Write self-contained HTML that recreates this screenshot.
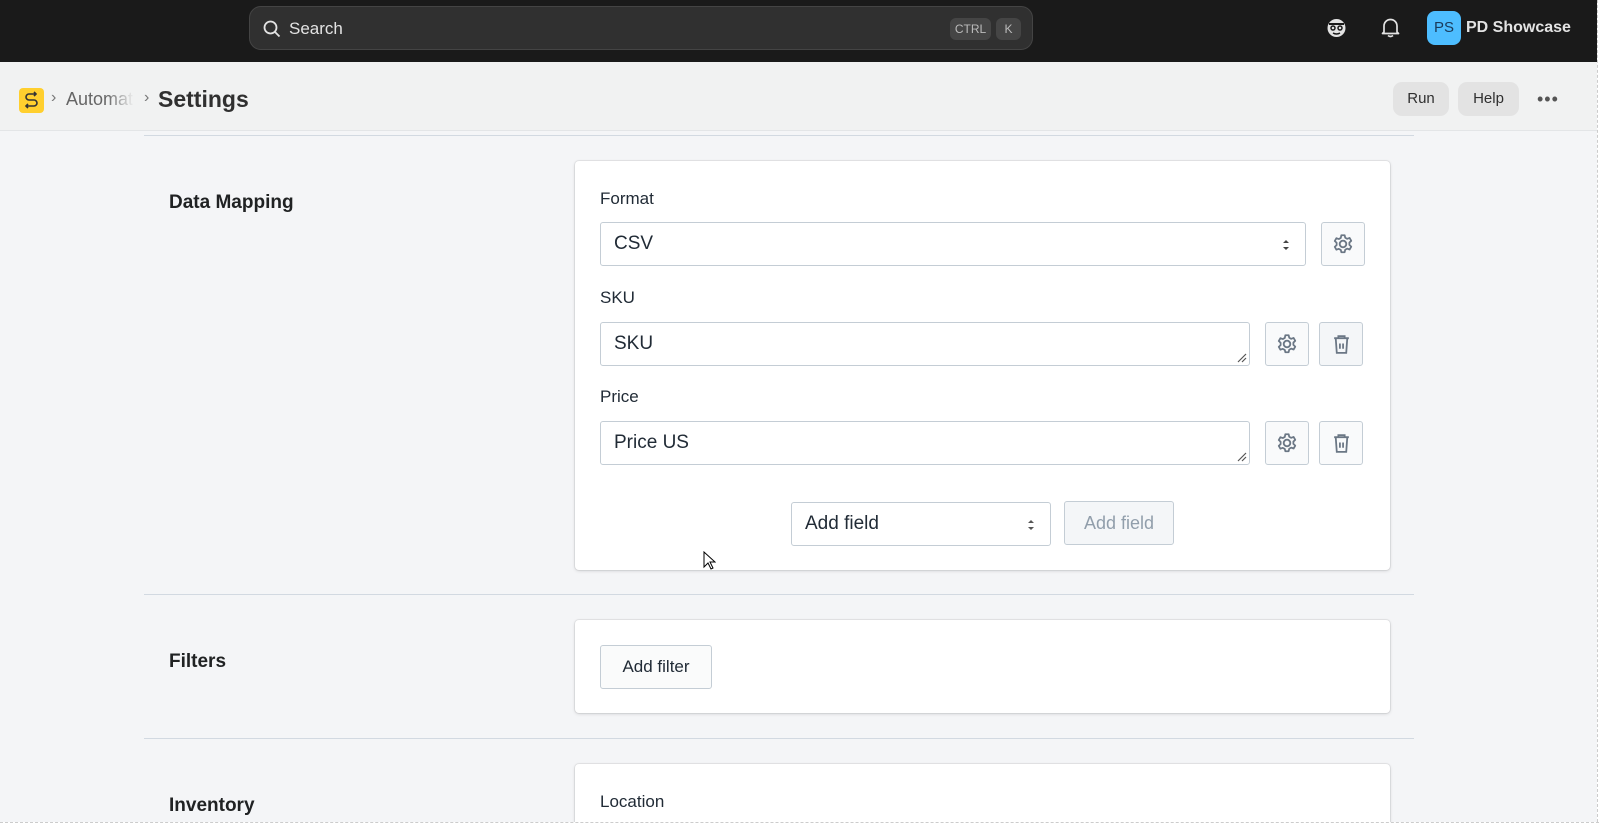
<!DOCTYPE html>
<html><head><style>
*{box-sizing:border-box;margin:0;padding:0}
body{width:1599px;height:839px;overflow:hidden;background:#fff;font-family:"Liberation Sans",sans-serif;position:relative}
.frame{position:absolute;left:0;top:0;width:1597px;height:822px;background:#f4f5f7;overflow:hidden}
.top{position:absolute;left:0;top:0;width:100%;height:62px;background:#1a1a1a}
.search{position:absolute;left:249px;top:6px;width:784px;height:44px;border-radius:12px;background:#303030;border:1px solid #444}
.search span{position:absolute;left:39px;top:12px;color:#e3e3e3;font-size:17px}
.kbd{position:absolute;top:11px;height:22px;background:#454545;border-radius:6px;color:#bbb;font-size:12px;line-height:22px;text-align:center}
.sub{position:absolute;left:0;top:62px;width:100%;height:69px;background:#f1f2f2;border-bottom:1px solid #e3e5e7}
.btn{position:absolute;top:20px;height:34px;border-radius:9px;background:#e3e3e3;font-size:15px;line-height:34px;text-align:center;color:#303030}
.sec{position:absolute;font-weight:bold;font-size:19px;color:#202223;left:169px}
.hr{position:absolute;left:144px;width:1270px;height:1px;background:#d2d9e1}
.card{position:absolute;left:575px;width:815px;background:#fff;border-radius:4px;box-shadow:0 0 0 1px rgba(63,63,68,.08),0 1px 3px rgba(63,63,68,.18)}
.lbl{position:absolute;left:25px;font-size:17px;color:#212b36}
.inp{position:absolute;left:25px;height:44px;border:1px solid #c4cdd5;border-radius:3px;font-size:19px;color:#212b36;padding:10px 13px;background:#fff}
.ib{position:absolute;width:44px;height:44px;border:1px solid #c4cdd5;border-radius:3px;background:#f9fafb;display:flex;align-items:center;justify-content:center}
.ib.g{background:#f4f6f8}
.arr{position:absolute;right:14px;top:15px}
.rs{position:absolute;right:2px;bottom:2px}
</style></head><body>
<div class="frame">
<div class="top">
 <div class="search">
  <svg style="position:absolute;left:13px;top:13px" width="18" height="18" viewBox="0 0 18 18"><circle cx="7.5" cy="7.5" r="6" fill="none" stroke="#e3e3e3" stroke-width="1.8"/><path d="M12 12l4.5 4.5" stroke="#e3e3e3" stroke-width="1.8"/></svg>
  <span>Search</span>
  <div class="kbd" style="left:700px;width:41px">CTRL</div>
  <div class="kbd" style="left:746px;width:25px">K</div>
 </div>
 <svg style="position:absolute;left:1326px;top:17px" width="21" height="21" viewBox="0 0 21 21"><circle cx="10.5" cy="11" r="9" fill="#e3e3e3"/><path d="M3 7h15" stroke="#1a1a1a" stroke-width="2"/><circle cx="7" cy="11" r="2" fill="none" stroke="#1a1a1a" stroke-width="1.5"/><circle cx="14" cy="11" r="2" fill="none" stroke="#1a1a1a" stroke-width="1.5"/><path d="M7 16q3.5 2 7 0" stroke="#1a1a1a" stroke-width="1.5" fill="none"/></svg>
 <svg style="position:absolute;left:1381px;top:17px" width="19" height="21" viewBox="0 0 19 21"><path d="M3 15V9a6.5 6.5 0 0113 0v6l1.5 1.5h-16z" fill="none" stroke="#e3e3e3" stroke-width="1.7" stroke-linejoin="round"/><path d="M7 18.5q2.5 2 5 0" stroke="#e3e3e3" stroke-width="1.7" fill="none"/></svg>
 <div style="position:absolute;left:1427px;top:11px;width:34px;height:34px;border-radius:8px;background:#4dbdff;color:#1a3a5a;font-size:15px;line-height:34px;text-align:center">PS</div>
 <div style="position:absolute;left:1466px;top:19px;color:#e3e3e3;font-size:16px;font-weight:bold;white-space:nowrap">PD Showcase</div>
</div>
<div class="sub">
 <div style="position:absolute;left:19px;top:26px;width:25px;height:25px;border-radius:4px;background:#ffcf2e"></div>
 <svg style="position:absolute;left:19px;top:26px" width="25" height="25" viewBox="0 0 25 25"><path d="M17 6H10a3 3 0 000 6h5a3 3 0 010 6H8M9 16l-2 2 2 2M15 4l2 2-2 2" fill="none" stroke="#333" stroke-width="1.6"/></svg>
 <div style="position:absolute;left:51px;top:27px;color:#777;font-size:16px">›</div>
 <div style="position:absolute;left:66px;top:27px;color:#666;font-size:18px;width:68px;overflow:hidden;white-space:nowrap;-webkit-mask-image:linear-gradient(90deg,#000 60%,transparent)">Automation</div>
 <div style="position:absolute;left:144px;top:27px;color:#777;font-size:16px">›</div>
 <div style="position:absolute;left:158px;top:24px;color:#303030;font-size:23px;font-weight:bold">Settings</div>
 <div class="btn" style="left:1393px;width:56px">Run</div>
 <div class="btn" style="left:1458px;width:61px">Help</div>
 <div style="position:absolute;left:1537px;top:27px;color:#555;font-size:18px;letter-spacing:1px">•••</div>
</div>
<div class="hr" style="top:135px"></div>
<div class="sec" style="top:192px">Data Mapping</div>
<div class="card" style="top:161px;height:409px">
 <div class="lbl" style="top:28px">Format</div>
 <div class="inp" style="top:61px;width:706px">CSV<svg class="arr" width="10" height="14" viewBox="0 0 10 14"><path d="M2 5l3-3 3 3zM2 9l3 3 3-3z" fill="#444"/></svg></div>
 <div class="ib" style="left:746px;top:61px"><svg width="22" height="22" viewBox="0 0 20 20"><circle cx="10" cy="10" r="3" fill="none" stroke="#6b7785" stroke-width="1.7"/><path d="M8.5 2h3l.5 2.3 1.8 1 2.2-.8 1.5 2.6-1.7 1.6v2.1l1.7 1.6-1.5 2.6-2.2-.8-1.8 1-.5 2.3h-3L8 15.4l-1.8-1-2.2.8-1.5-2.6 1.7-1.6V8.9L2.5 7.3 4 4.7l2.2.8 1.8-1z" fill="none" stroke="#6b7785" stroke-width="1.6" stroke-linejoin="round"/></svg></div>
 <div class="lbl" style="top:127px">SKU</div>
 <div class="inp" style="top:161px;width:650px">SKU<svg class="rs" width="10" height="10" viewBox="0 0 10 10"><path d="M9 1L1 9M9 5L5 9" stroke="#555" stroke-width="1.2"/></svg></div>
 <div class="ib" style="left:690px;top:161px"><svg width="22" height="22" viewBox="0 0 20 20"><circle cx="10" cy="10" r="3" fill="none" stroke="#6b7785" stroke-width="1.7"/><path d="M8.5 2h3l.5 2.3 1.8 1 2.2-.8 1.5 2.6-1.7 1.6v2.1l1.7 1.6-1.5 2.6-2.2-.8-1.8 1-.5 2.3h-3L8 15.4l-1.8-1-2.2.8-1.5-2.6 1.7-1.6V8.9L2.5 7.3 4 4.7l2.2.8 1.8-1z" fill="none" stroke="#6b7785" stroke-width="1.6" stroke-linejoin="round"/></svg></div>
 <div class="ib g" style="left:744px;top:161px"><svg width="19" height="21" viewBox="0 0 18 20"><path d="M2 4h14M6 4V2h6v2M3.5 4l1 14h9l1-14M7.5 9v5M10.5 9v5" fill="none" stroke="#6b7785" stroke-width="1.7"/></svg></div>
 <div class="lbl" style="top:226px">Price</div>
 <div class="inp" style="top:260px;width:650px">Price US<svg class="rs" width="10" height="10" viewBox="0 0 10 10"><path d="M9 1L1 9M9 5L5 9" stroke="#555" stroke-width="1.2"/></svg></div>
 <div class="ib" style="left:690px;top:260px"><svg width="22" height="22" viewBox="0 0 20 20"><circle cx="10" cy="10" r="3" fill="none" stroke="#6b7785" stroke-width="1.7"/><path d="M8.5 2h3l.5 2.3 1.8 1 2.2-.8 1.5 2.6-1.7 1.6v2.1l1.7 1.6-1.5 2.6-2.2-.8-1.8 1-.5 2.3h-3L8 15.4l-1.8-1-2.2.8-1.5-2.6 1.7-1.6V8.9L2.5 7.3 4 4.7l2.2.8 1.8-1z" fill="none" stroke="#6b7785" stroke-width="1.6" stroke-linejoin="round"/></svg></div>
 <div class="ib" style="left:744px;top:260px"><svg width="19" height="21" viewBox="0 0 18 20"><path d="M2 4h14M6 4V2h6v2M3.5 4l1 14h9l1-14M7.5 9v5M10.5 9v5" fill="none" stroke="#6b7785" stroke-width="1.7"/></svg></div>
 <div class="inp" style="left:216px;top:341px;width:260px">Add field<svg class="arr" width="10" height="14" viewBox="0 0 10 14"><path d="M2 5l3-3 3 3zM2 9l3 3 3-3z" fill="#555"/></svg></div>
 <div style="position:absolute;left:489px;top:340px;width:110px;height:44px;border:1px solid #c4cdd5;border-radius:3px;background:#f4f6f8;color:#919eab;font-size:18px;line-height:42px;text-align:center">Add field</div>
</div>
<div class="hr" style="top:594px"></div>
<div class="sec" style="top:651px">Filters</div>
<div class="card" style="top:620px;height:93px">
 <div style="position:absolute;left:25px;top:25px;width:112px;height:44px;border:1px solid #c4cdd5;border-radius:3px;background:#fafbfb;color:#212b36;font-size:17px;line-height:42px;text-align:center">Add filter</div>
</div>
<div class="hr" style="top:738px"></div>
<div class="sec" style="top:795px">Inventory</div>
<div class="card" style="top:764px;height:100px">
 <div class="lbl" style="top:28px">Location</div>
</div>
<svg style="position:absolute;left:703px;top:551px" width="13" height="20" viewBox="0 0 13 20"><path d="M1 1v15l4-4 3 6 2-1-3-6h5z" fill="#fff" stroke="#000" stroke-width="1"/></svg>
</div>
<div style="position:absolute;left:0;top:822px;width:1599px;border-top:1px dashed #ccc"></div>
<div style="position:absolute;left:1597px;top:0;height:822px;border-left:1px dashed #ccc"></div>
</body></html>
